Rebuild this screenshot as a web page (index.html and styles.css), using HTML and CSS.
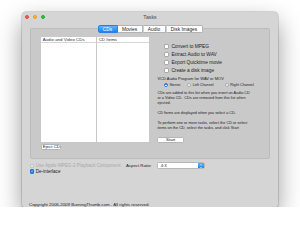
FILE: index.html
```html
<!DOCTYPE html>
<html>
<head>
<meta charset="utf-8">
<link rel="stylesheet" href="styles.css">
</head>
<body>
<div class="window">
  <div class="titlebar">
    <div class="lights"><span class="light red"></span><span class="light yellow"></span><span class="light green"></span></div>
    <div class="title">Tasks</div>
    <div class="spacer"></div>
  </div>
  <div class="tabview">
    <div class="tabs">
      <span class="tab sel t1">CDs</span><span class="tab t2">Movies</span><span class="tab t3">Audio</span><span class="tab t4">Disk Images</span>
    </div>
    <div class="panel">
      <div class="leftcol">
        <div class="lists">
          <div class="list l1"><div class="lh">Audio and Video CDs</div></div>
          <div class="list l2"><div class="lh">CD Items</div></div>
        </div>
        <div class="btn eject">Eject CD</div>
      </div>
      <div class="rightcol">
        <div class="checks">
          <div class="chk"><span class="box"></span>Convert to MPEG</div>
          <div class="chk"><span class="box"></span>Extract Audio to WAV</div>
          <div class="chk"><span class="box"></span>Export Quicktime movie</div>
          <div class="chk"><span class="box"></span>Create a disk image</div>
        </div>
        <div class="vcd">VCD Audio Program for WAV or MOV</div>
        <div class="radios">
          <div class="radio r1"><span class="dot on"><span class="pip"></span></span>Stereo</div>
          <div class="radio r2"><span class="dot"></span>Left Channel</div>
          <div class="radio"><span class="dot"></span>Right Channel</div>
        </div>
        <p class="p1">CDs are added to this list when you insert an Audio CD<br>or a Video CD.&nbsp; CDs are removed from this list when<br>ejected.</p>
        <p>CD Items are displayed when you select a CD.</p>
        <p>To perform one or more tasks, select the CD or select<br>items on the CD, select the tasks, and click Start</p>
        <div class="btn start">Start</div>
      </div>
    </div>
  </div>
  <div class="opts">
    <div class="row1">
      <div class="opt dis"><span class="box"></span>Use Apple MPEG-2 Playback Component</div>
      <div class="ar">Aspect Ratio:</div>
      <div class="select"><span class="val">4:3</span><span class="stepper"><svg viewBox="0 0 6 7" width="6" height="6.7"><path d="M1.8 2.6 L3 1.5 L4.2 2.6 M1.8 4.3 L3 5.4 L4.2 4.3" fill="none" stroke="#fff" stroke-width="0.6"/></svg></span></div>
    </div>
    <div class="opt row2"><span class="box checked"><svg viewBox="0 0 5 5" width="4.3" height="4.3"><path d="M1.1 2.6 L2.1 3.6 L3.9 1.3" fill="none" stroke="#fff" stroke-width="0.8"/></svg></span>De-interlace</div>
  </div>
  <div class="copyright">Copyright 2006-2009 BurningThumb.com - All rights reserved.</div>
</div>
</body>
</html>
```
FILE: styles.css
```css
body {
  margin: 0;
  padding: 12px 0 0 22px;
  background: #ffffff;
  font-family: "Liberation Sans", Arial, sans-serif;
  color: #222;
}
.window {
  width: 256px;
  height: 195px;
  box-sizing: border-box;
  background: #d5d5d5;
  border-radius: 4px 4px 2px 2px;
  box-shadow: 0 10px 24px rgba(0,0,0,0.4), 0 0 0 0.5px rgba(0,0,0,0.25);
  display: flex;
  flex-direction: column;
  overflow: hidden;
}
.titlebar {
  height: 10px;
  display: flex;
  align-items: center;
  flex-shrink: 0;
}
.lights {
  display: flex;
  gap: 3.7px;
  padding-left: 3.3px;
  width: 20px;
  margin-top: 0.4px;
}
.spacer { width: 23.3px; }
.light {
  width: 4px;
  height: 4px;
  border-radius: 50%;
  box-sizing: border-box;
}
.red { background: #fc5f57; border: 0.3px solid #de4a42; }
.yellow { background: #fdbb2e; border: 0.3px solid #dd9e27; }
.green { background: #2bc840; border: 0.3px solid #22a834; }
.title {
  flex: 1;
  text-align: center;
  font-size: 5.2px;
  color: #4a4a4a;
}
.tabview {
  margin: 3px 8px 0;
  display: flex;
  flex-direction: column;
}
.tabs {
  display: flex;
  justify-content: center;
  height: 8px;
  position: relative;
  z-index: 1;
}
.tab {
  height: 8px;
  box-sizing: border-box;
  background: #ffffff;
  border: 0.6px solid #b3b3b3;
  border-left: 0.6px solid #cfcfcf;
  font-size: 4.8px;
  display: flex;
  align-items: center;
  justify-content: center;
  color: #222;
}
.t1 { width: 20px; border-radius: 2px 0 0 2px; border-left-color: #b3b3b3; }
.t2 { width: 25px; border-left: none; }
.t3 { width: 23px; }
.t4 { width: 37px; border-radius: 0 2px 2px 0; }
.tab.sel {
  background: linear-gradient(#69b1fa, #1583f3);
  border-color: #2b7fe0;
  color: #fff;
}
.panel {
  margin-top: -5px;
  height: 131px;
  box-sizing: border-box;
  background: #c9c9c9;
  border: 0.6px solid #bcbcbc;
  border-radius: 2px;
  padding: 8.4px 0 0 10.4px;
  display: flex;
  gap: 8px;
}
.leftcol {
  width: 108px;
  display: flex;
  flex-direction: column;
}
.lists {
  display: flex;
  height: 105px;
  gap: 1px;
}
.list { background: #ffffff; height: 100%; }
.l1 { width: 55px; }
.l2 { width: 52px; }
.lh {
  height: 5px;
  line-height: 5px;
  font-size: 4.4px;
  padding-left: 1.3px;
  border-bottom: 0.5px solid #d6d6d6;
  color: #333;
  white-space: nowrap;
  overflow: hidden;
}
.btn {
  background: #ffffff;
  border: 0.5px solid #b4b4b4;
  border-radius: 1.5px;
  font-size: 4.4px;
  display: flex;
  align-items: center;
  justify-content: center;
  box-sizing: border-box;
  color: #222;
}
.eject { width: 20px; height: 6px; margin-top: 1.3px; }
.rightcol {
  display: flex;
  flex-direction: column;
  white-space: nowrap;
}
.checks { padding: 4.9px 0 0 7px; }
.chk {
  display: flex;
  align-items: center;
  height: 8.2px;
  font-size: 4.8px;
  gap: 2px;
}
.box {
  width: 5px;
  height: 5px;
  flex-shrink: 0;
  background: #ffffff;
  border: 0.5px solid #a9a9a9;
  border-radius: 1px;
  box-sizing: border-box;
  display: flex;
  align-items: center;
  justify-content: center;
}
.vcd {
  font-size: 4px;
  height: 5px;
  line-height: 5px;
  margin-top: 1.1px;
}
.radios {
  display: flex;
  align-items: center;
  height: 6px;
  margin-top: 1.2px;
  padding-left: 6.7px;
  font-size: 3.7px;
}
.radio { display: flex; align-items: center; gap: 1.3px; }
.r1 { width: 23.3px; }
.r2 { width: 37.7px; }
.dot {
  width: 4px;
  height: 4px;
  border-radius: 50%;
  background: #ffffff;
  border: 0.5px solid #a9a9a9;
  box-sizing: border-box;
  display: flex;
  align-items: center;
  justify-content: center;
}
.dot.on { background: #3a8ef4; border-color: #2a7be0; }
.pip { width: 1.4px; height: 1.4px; border-radius: 50%; background: #fff; }
p {
  margin: 5px 0 0;
  font-size: 3.8px;
  line-height: 5px;
}
p.p1 { margin-top: 2.5px; }
.start { width: 26.6px; height: 6.7px; margin-top: 5.8px; }
.opts {
  padding-left: 8px;
  display: flex;
  flex-direction: column;
}
.row1 {
  display: flex;
  align-items: center;
  height: 6.5px;
  margin-top: 3.5px;
}
.opt {
  display: flex;
  align-items: center;
  gap: 1.4px;
  font-size: 4.6px;
  white-space: nowrap;
}
.opt .box { width: 4.3px; height: 4.3px; }
.dis { width: 96px; color: #a9a9a9; }
.dis .box { border-color: #c4c4c4; background: #e4e4e4; }
.ar { width: 30.7px; font-size: 4.3px; white-space: nowrap; }
.select {
  width: 48.3px;
  height: 6.7px;
  box-sizing: border-box;
  background: #ffffff;
  border: 0.5px solid #b9b9b9;
  border-radius: 1.5px;
  display: flex;
  align-items: center;
  font-size: 4.2px;
  overflow: hidden;
}
.val { flex: 1; padding-left: 3px; }
.stepper {
  width: 6px;
  height: 100%;
  background: linear-gradient(#62acf8, #1a84f2);
  display: flex;
}
.row2 { height: 5px; }
.box.checked { background: #2f87f0; border-color: #2474d8; }
.copyright {
  margin-top: auto;
  margin-left: 7px;
  margin-bottom: 0.3px;
  height: 5px;
  line-height: 5px;
  font-size: 4.4px;
  white-space: nowrap;
}
```
